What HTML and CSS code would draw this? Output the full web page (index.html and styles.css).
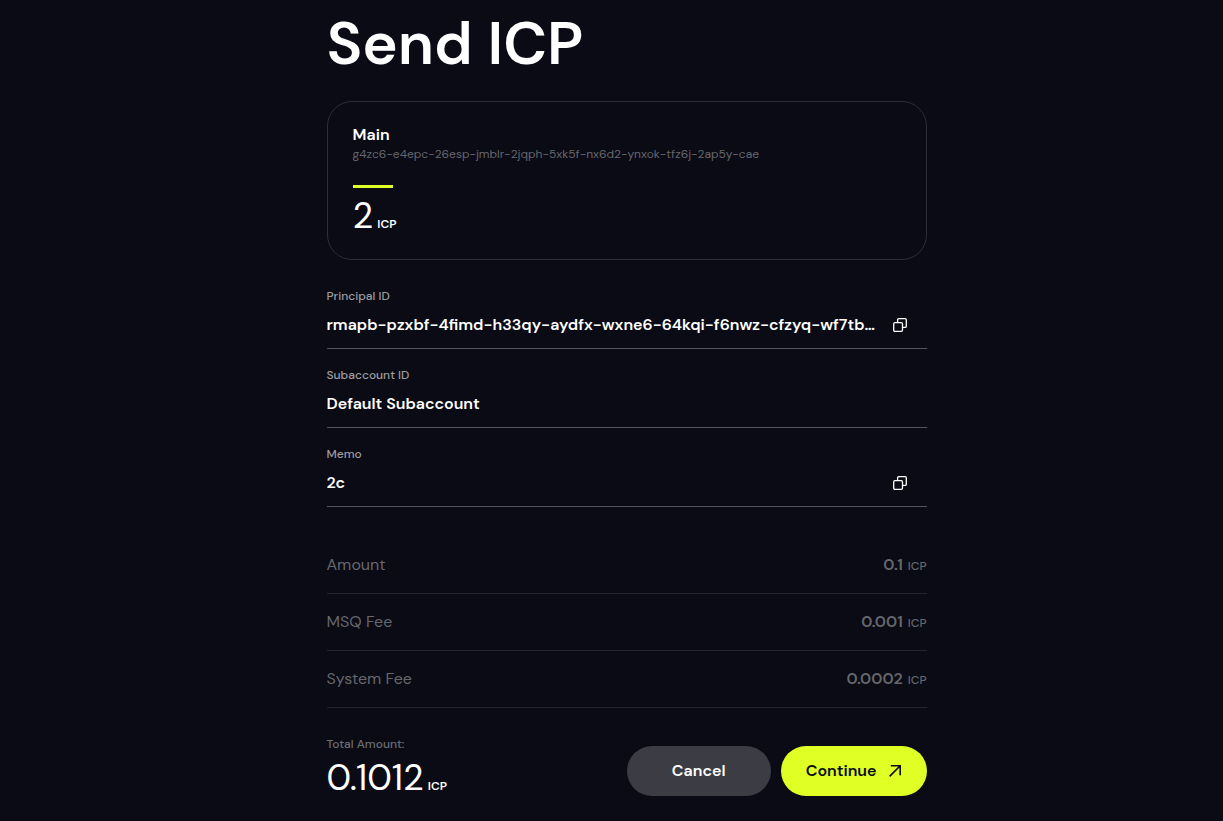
FILE: index.html
```html
<!DOCTYPE html>
<html lang="en">
<head>
<meta charset="utf-8">
<meta name="viewport" content="width=device-width, initial-scale=1">
<title>Send ICP</title>
<link rel="stylesheet" href="styles.css">
</head>
<body>
<main class="page">
  <div class="content">
    <h1 class="title">Send ICP</h1>

    <section class="account">
      <h2 class="account-name">Main</h2>
      <p class="account-id">g4zc6-e4epc-26esp-jmblr-2jqph-5xk5f-nx6d2-ynxok-tfz6j-2ap5y-cae</p>
      <div class="accent"></div>
      <p class="balance"><span class="balance-value">2</span><span class="balance-unit">ICP</span></p>
    </section>

    <dl class="fields">
      <div class="field">
        <dt class="label">Principal ID</dt>
        <dd class="value">
          <span class="value-text">rmapb-pzxbf-4fimd-h33qy-aydfx-wxne6-64kqi-f6nwz-cfzyq-wf7tb…</span>
          <button class="copy" type="button" aria-label="Copy principal ID">
            <svg class="copy-icon" viewBox="0 0 14 14"><rect x="0.7" y="4.7" width="8.8" height="8.6" rx="1.2"/><path d="M4.6 4.7V1.9Q4.6.7 5.8.7H12.1Q13.3.7 13.3 1.9V8.2Q13.3 9.4 12.1 9.4H9.5"/></svg>
          </button>
        </dd>
      </div>
      <div class="field">
        <dt class="label">Subaccount ID</dt>
        <dd class="value"><span class="value-text">Default Subaccount</span></dd>
      </div>
      <div class="field">
        <dt class="label">Memo</dt>
        <dd class="value">
          <span class="value-text">2c</span>
          <button class="copy" type="button" aria-label="Copy memo">
            <svg class="copy-icon" viewBox="0 0 14 14"><rect x="0.7" y="4.7" width="8.8" height="8.6" rx="1.2"/><path d="M4.6 4.7V1.9Q4.6.7 5.8.7H12.1Q13.3.7 13.3 1.9V8.2Q13.3 9.4 12.1 9.4H9.5"/></svg>
          </button>
        </dd>
      </div>
    </dl>

    <dl class="fees">
      <div class="fee"><dt>Amount</dt><dd class="fee-value"><b class="fee-number">0.1</b><span class="fee-unit">ICP</span></dd></div>
      <div class="fee"><dt>MSQ Fee</dt><dd class="fee-value"><b class="fee-number">0.001</b><span class="fee-unit">ICP</span></dd></div>
      <div class="fee"><dt>System Fee</dt><dd class="fee-value"><b class="fee-number">0.0002</b><span class="fee-unit">ICP</span></dd></div>
    </dl>

    <footer class="footer">
      <div class="total">
        <p class="total-label">Total Amount:</p>
        <p class="balance"><span class="balance-value">0.1012</span><span class="balance-unit">ICP</span></p>
      </div>
      <div class="actions">
        <button class="button button-cancel" type="button">Cancel</button>
        <button class="button button-continue" type="button">Continue
          <svg class="arrow" viewBox="-1 -1 14 14"><path d="M.6 11.4 11.2.8M1.8.8H11.2V10.2"/></svg>
        </button>
      </div>
    </footer>
  </div>
</main>
</body>
</html>
```
FILE: styles.css
```css
* {
  box-sizing: border-box;
  margin: 0;
  padding: 0;
}

body {
  background: #0a0b15;
  color: #fff;
  font-family: "DM Sans", Inter, "Open Sans", sans-serif;
  font-size: 16px;
  line-height: 22px;
}

button {
  border: 0;
  font: inherit;
  cursor: pointer;
}

.page {
  padding: 14px 0 24px 30px;
}

.content {
  max-width: 600px;
  margin: 0 auto;
}

.title {
  font-size: 60px;
  font-weight: 600;
  line-height: 60px;
}

.account {
  margin-top: 27px;
  padding: 22px 25px 25px;
  border: 1px solid #2e2e37;
  border-radius: 25px;
}

.account-name {
  font-size: 16px;
  font-weight: 600;
}

.account-id {
  color: #66676d;
  font-size: 12px;
  line-height: 16px;
}

.accent {
  width: 40px;
  height: 3px;
  margin: 23px 0 10px;
  background: #e0ff25;
}

.balance {
  display: flex;
  align-items: baseline;
  gap: 4px;
  line-height: 36px;
}

.balance-value {
  font-size: 36px;
}

.balance-unit {
  font-size: 12px;
  font-weight: 600;
  line-height: 12px;
}

.fields {
  margin-top: 10px;
}

.field {
  padding: 18px 0 12px;
  border-bottom: 1px solid #54545c;
}

.label {
  color: #9d9da1;
  font-size: 12px;
  font-weight: 500;
  line-height: 16px;
}

.value {
  display: flex;
  align-items: center;
  justify-content: space-between;
  margin-top: 10px;
  padding-right: 20px;
  font-weight: 600;
}

.value-text {
  min-width: 0;
  overflow: hidden;
  text-overflow: ellipsis;
  white-space: nowrap;
}

.copy {
  display: flex;
  flex-shrink: 0;
  margin-left: 16px;
  background: none;
}

.copy-icon {
  width: 14px;
  height: 14px;
  fill: none;
  stroke: #fff;
  stroke-width: 1.3;
}

.fees {
  margin-top: 30px;
  color: #66676d;
}

.fee {
  display: flex;
  justify-content: space-between;
  padding: 17px 0;
  border-bottom: 1px solid #23242d;
}

.fee-value {
  display: flex;
  align-items: baseline;
  gap: 5px;
}

.fee-number {
  font-weight: 600;
}

.fee-unit {
  font-size: 12px;
  font-weight: 500;
  line-height: 12px;
}

.footer {
  display: flex;
  align-items: flex-end;
  justify-content: space-between;
  margin-top: 28px;
}

.total-label {
  margin-bottom: 8px;
  color: #6c6d73;
  font-size: 12px;
  font-weight: 500;
  line-height: 16px;
}

.actions {
  display: flex;
  gap: 10px;
}

.button {
  display: flex;
  align-items: center;
  justify-content: center;
  gap: 11px;
  min-width: 144px;
  height: 50px;
  padding: 0 25px;
  border-radius: 25px;
  font-weight: 600;
}

.button-cancel {
  background: #3c3c45;
  color: #fff;
}

.button-continue {
  background: #e0ff25;
  color: #0a0b15;
}

.arrow {
  width: 14px;
  height: 14px;
  fill: none;
  stroke: currentColor;
  stroke-width: 1.6;
}
```
